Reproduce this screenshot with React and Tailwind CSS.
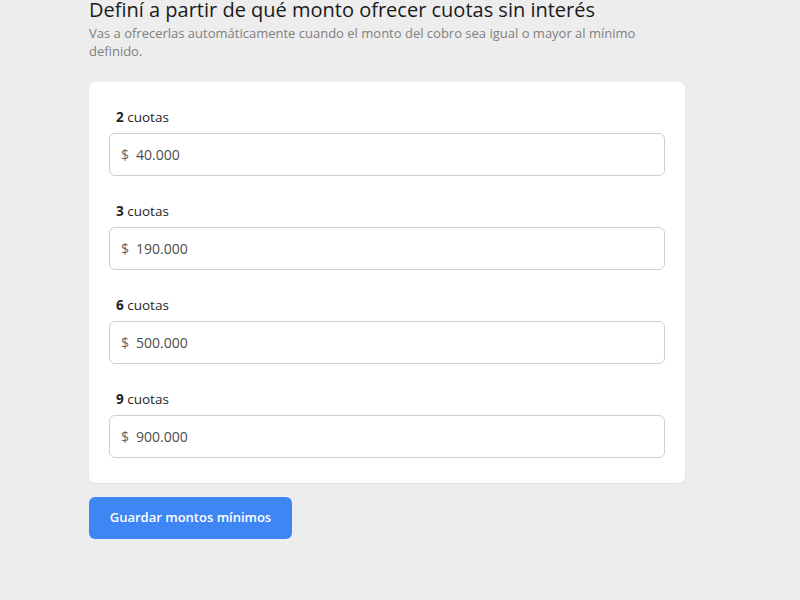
const cuotas = [
  { n: 2, monto: '40.000' },
  { n: 3, monto: '190.000' },
  { n: 6, monto: '500.000' },
  { n: 9, monto: '900.000' },
];

function MontoField({ n, monto }) {
  return (
    <div className="flex flex-col">
      <label className="pl-[7px] text-[13.5px] leading-[18px] text-[#1f1f1f]">
        <span className="font-bold">{n}</span> cuotas
      </label>
      <div className="mt-[7px] flex h-[43px] items-center rounded-[6px] border border-[#cfcfcf] bg-white px-[11px] text-[14px] text-[#4d4d4d]">
        <span className="text-[#666]">$</span>
        <span className="ml-[7px]">{monto}</span>
      </div>
    </div>
  );
}

export default function App() {
  return (
    <div className="min-h-screen w-full bg-[#ededed] pl-[89px] font-['Open_Sans',sans-serif]">
      <div className="w-[596px]">
        <h1 className="text-[20px] font-medium leading-[20px] text-[#1a1a1a]">
          Definí a partir de qué monto ofrecer cuotas sin interés
        </h1>
        <p className="mt-[4px] pr-[14px] text-[13px] leading-[18px] text-[#808080]">
          Vas a ofrecerlas automáticamente cuando el monto del cobro sea igual o mayor al mínimo definido.
        </p>

        <div className="mt-[22px] flex flex-col gap-[26px] rounded-[6px] bg-white px-[20px] pb-[25px] pt-[26px] shadow-[0_1px_2px_rgba(0,0,0,0.06)]">
          {cuotas.map((c) => (
            <MontoField key={c.n} {...c} />
          ))}
        </div>

        <button className="mt-[14px] h-[42px] w-[203px] rounded-[6px] bg-[#3f86f5] text-[13px] font-semibold text-white">
          Guardar montos mínimos
        </button>
      </div>
    </div>
  );
}
